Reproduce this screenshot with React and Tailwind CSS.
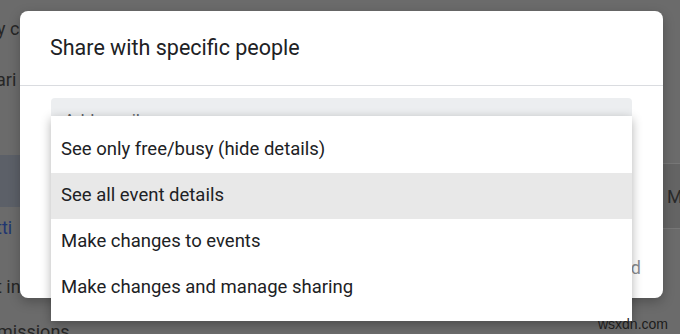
import React from 'react';

const OPTIONS = [
  'See only free/busy (hide details)',
  'See all event details',
  'Make changes to events',
  'Make changes and manage sharing',
];

export default function App() {
  const active = 1;
  return (
    <div className="relative w-[680px] h-[334px] overflow-hidden bg-[#6b6b6b] font-['Roboto','Liberation_Sans',sans-serif]">
      {/* Page behind the scrim */}
      <div className="flex flex-col text-[18px] text-[#262626] [&>*]:shrink-0">
        <div className="h-[15px] flex">
          <div className="ml-[342px] w-[74px] border-b border-[#5a5a5a]" />
        </div>
        <div className="h-[28px] leading-[28px] -ml-[3px]">y ca</div>
        <div className="h-[24px]" />
        <div className="h-[26px] leading-[26px] -ml-[4px]">ari</div>
        <div className="h-[62px]" />
        <div className="h-[52px] flex">
          <div className="w-[22px] bg-[#5c6068]" />
          <div className="flex-1" />
        </div>
        <div className="h-[8px]" />
        <div className="h-[26px] leading-[26px] -ml-[4px] text-[#1f3670]">tti</div>
        <div className="h-[33px]" />
        <div className="h-[26px] leading-[26px] -ml-[4px]">t in</div>
        <div className="h-[19px]" />
        <div className="h-[26px] leading-[26px] -ml-[3px]">missions</div>
      </div>

      {/* Right-side band behind dialog */}
      <div className="absolute left-[650px] top-[163px] w-[30px] h-[66px] bg-[#646464] border-y border-[#777] flex items-center">
        <span className="ml-[17px] text-[18px] text-[#2a2a2a]">M</span>
      </div>

      {/* Dialog */}
      <div className="absolute left-[20px] top-[11px] w-[643px] h-[287px] rounded-[8px] bg-white flex flex-col shadow-[0_4px_12px_rgba(0,0,0,0.25)]">
        <div className="h-[75px] px-[30px] pt-[24px] border-b border-[#dadce0]">
          <div className="text-[21.5px] leading-[26px] text-[#202124]">Share with specific people</div>
        </div>
        <div className="mt-[12px] mx-[31px] h-[40px] rounded-t-[4px] bg-[#eceef0] px-[13px] pt-[12px] text-[17px] leading-[20px] text-[#5f6368]">
          Add email or name
        </div>
        <div className="flex-1" />
        <div className="h-[54px] flex items-start justify-end gap-[26px] pr-[22px] pt-[10px] text-[18px] text-[#8a8d91]">
          <span>Cancel</span>
          <span>Send</span>
        </div>
      </div>

      {/* Dropdown menu */}
      <div className="absolute left-[51px] top-[116px] w-[581px] h-[205px] bg-white py-[11px] shadow-[0_3px_10px_rgba(0,0,0,0.3)] flex flex-col">
        {OPTIONS.map((label, i) => (
          <div
            key={label}
            className={
              'h-[46px] shrink-0 flex items-center px-[10px] text-[18.5px] text-[#202124] ' +
              (i === active ? 'bg-[#e8e8e8]' : 'bg-white')
            }
          >
            {label}
          </div>
        ))}
      </div>

      {/* Watermark */}
      <div className="absolute right-[12px] bottom-[2px] text-[14px] leading-[16px] text-[#1c1c1c] font-['Liberation_Sans',sans-serif]">
        wsxdn.com
      </div>
    </div>
  );
}
